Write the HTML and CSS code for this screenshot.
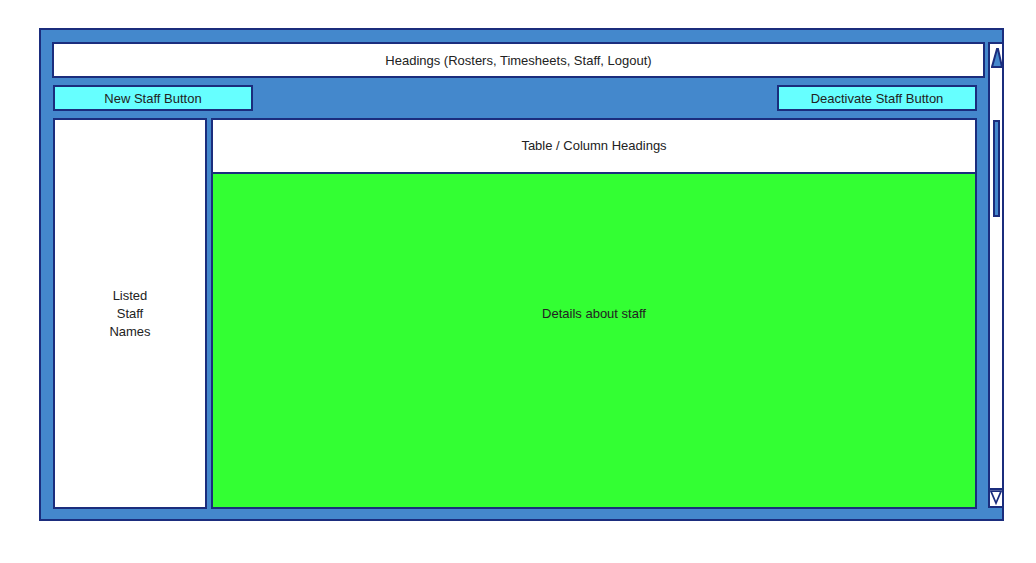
FILE: index.html
```html
<!DOCTYPE html>
<html>
<head>
<meta charset="utf-8">
<link rel="stylesheet" href="styles.css">
</head>
<body>
<div class="frame">
  <div class="col">
    <div class="header">Headings (Rosters, Timesheets, Staff, Logout)</div>
    <div class="btnrow">
      <div class="btn">New Staff Button</div>
      <div class="btn">Deactivate Staff Button</div>
    </div>
    <div class="panels">
      <div class="list">Listed<br>Staff<br>Names</div>
      <div class="main">
        <div class="thead">Table / Column Headings</div>
        <div class="details">Details about staff</div>
      </div>
    </div>
  </div>
  <div class="scroll">
    <svg class="up" width="12" height="22" viewBox="0 0 12 22"><polygon points="1,20 11,20 7,2 6,2" fill="#4488cc" stroke="#1b2d7d" stroke-width="2" stroke-linejoin="miter"/></svg>
    <div class="thumb"></div>
    <div class="down">
      <svg width="14" height="17" viewBox="0 0 14 17"><polygon points="1,1 13,1 7,15" fill="#ffffff" stroke="#1b2d7d" stroke-width="2"/></svg>
    </div>
  </div>
</div>
</body>
</html>
```
FILE: styles.css
```css
* { box-sizing: border-box; }
html, body { margin: 0; padding: 0; background: #ffffff; }
body {
  font-family: "Liberation Sans", Arial, sans-serif;
  font-size: 13px;
  color: #222222;
  width: 1036px;
  height: 563px;
}
.frame {
  margin: 28px 0 0 39px;
  width: 965px;
  height: 493px;
  background: #4488cc;
  border: 2px solid #1b2d7d;
  display: flex;
  padding: 12px 0 0 11px;
}
.col {
  width: 933px;
  display: flex;
  flex-direction: column;
}
.header {
  height: 36px;
  background: #ffffff;
  border: 2px solid #1b2d7d;
  display: flex;
  align-items: center;
  justify-content: center;
}
.btnrow {
  margin: 7px 8px 0 1px;
  height: 26px;
  display: flex;
  justify-content: space-between;
}
.btn {
  width: 200px;
  height: 26px;
  background: #66ffff;
  border: 2px solid #1b2d7d;
  display: flex;
  align-items: center;
  justify-content: center;
}
.panels {
  margin: 7px 8px 0 1px;
  height: 391px;
  display: flex;
  gap: 4px;
}
.list {
  width: 154px;
  background: #ffffff;
  border: 2px solid #1b2d7d;
  display: flex;
  align-items: center;
  justify-content: center;
  text-align: center;
  line-height: 18px;
}
.main {
  flex: 1;
  border: 2px solid #1b2d7d;
  display: flex;
  flex-direction: column;
}
.thead {
  height: 54px;
  background: #ffffff;
  border-bottom: 2px solid #1b2d7d;
  display: flex;
  align-items: center;
  justify-content: center;
  padding-bottom: 1px;
}
.details {
  flex: 1;
  background: #33ff33;
  text-align: center;
  line-height: 18px;
  padding-top: 131px;
}
.scroll {
  margin-left: 3px;
  margin-right: -2px;
  width: 16px;
  height: 466px;
  background: #ffffff;
  border: 2px solid #1b2d7d;
  display: flex;
  flex-direction: column;
  align-items: center;
}
.up {
  display: block;
  margin-top: 3px;
  margin-left: 1px;
}
.thumb {
  margin-top: 51px;
  width: 7px;
  height: 97px;
  background: #4488cc;
  border: 2px solid #1b2d7d;
  margin-left: 1px;
}
.down {
  margin-top: auto;
  width: 16px;
  height: 20px;
  margin-left: -2px;
  margin-right: -2px;
  margin-bottom: -2px;
  border: 2px solid #1b2d7d;
  background: #ffffff;
  display: flex;
  justify-content: center;
}
.down svg { display: block; margin-top: -1px; }
```
